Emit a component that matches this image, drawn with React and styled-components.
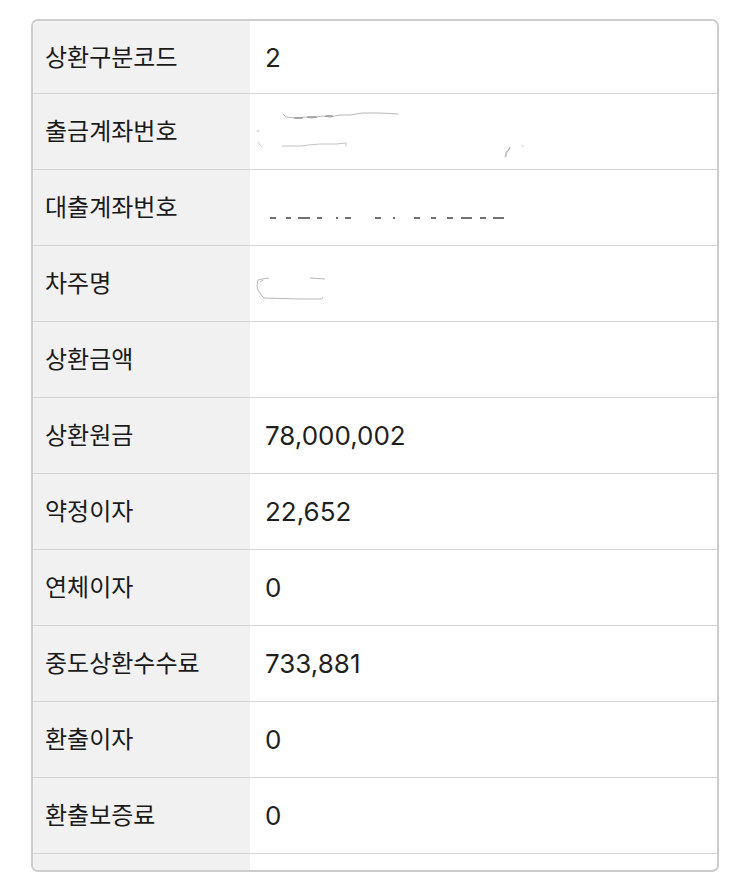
import React from "react";
import styled, { createGlobalStyle } from "styled-components";

const Global = createGlobalStyle`
  html, body { margin: 0; padding: 0; background: #ffffff; }
  body { font-family: "Noto Sans CJK KR", "Noto Sans", sans-serif; }
  * { box-sizing: border-box; }
`;

const Page = styled.div`
  width: 750px;
  height: 891px;
  padding: 19px 0 0 31px;
`;

const Frame = styled.div`
  width: 688px;
  border: 2px solid #cdcdcd;
  border-radius: 7px;
  overflow: hidden;
`;

const Row = styled.div`
  display: grid;
  grid-template-columns: 217px 1fr;
  height: ${(p) => p.$h}px;
  border-bottom: ${(p) => (p.$last ? "none" : "1px solid #d4d4d4")};
`;

const Label = styled.div`
  background: #f1f1f1;
  display: flex;
  align-items: center;
  padding: 0 0 4px 12px;
  font-family: "Noto Sans CJK KR", sans-serif;
  font-size: 24px;
  font-weight: 400;
  color: #1a1a1a;
`;

const Value = styled.div`
  position: relative;
  display: flex;
  align-items: center;
  padding-left: 15px;
  font-family: "Inter", "Noto Sans CJK KR", sans-serif;
  font-size: 26px;
  color: #1f1f1f;
`;

const Scribble = styled.svg`
  position: absolute;
  left: 0;
  top: 0;
  pointer-events: none;
`;

const AccountOut = () => (
  <Scribble width="300" height="75" viewBox="0 0 300 75">
    <g stroke="#9a9a9a" strokeWidth="1" fill="none" strokeLinecap="round">
      <path d="M33 20 L36 23 L45 24 L55 23 L62 24 L72 22 L80 23 L90 21 L100 21 L112 19 L130 19 L148 20" opacity="0.7" />
      <path d="M45 24 L52 24 M58 23 L66 23 M76 22 L82 22" strokeWidth="2" opacity="0.8" />
      <path d="M32 52 L52 52 L58 51 L70 50 L86 50 L96 49 L96 52" opacity="0.6" />
      <path d="M7 37 L9 37" opacity="0.6" />
      <path d="M8 48 L10 51 L12 53" opacity="0.5" />
      <path d="M255 63 L256 58 L259 56 L260 53 L257 58 L256 63" opacity="0.6" />
      <path d="M272 52 L273 52" opacity="0.6" />
    </g>
  </Scribble>
);

const AccountLoan = () => (
  <Scribble width="300" height="75" viewBox="0 0 300 75">
    <g stroke="#444" strokeWidth="1.6" fill="none">
      <path d="M20 48 L26 48 M36 48 L41 48 M48 48 L60 48 M67 48 L72 48 M86 48 L88 48 M95 48 L101 48 M125 48 L131 48 M143 48 L145 48 M164 48 L170 48 M181 48 L186 48 M197 48 L203 48 M211 48 L222 48 M230 48 L236 48 M243 48 L254 48" />
    </g>
  </Scribble>
);

const Borrower = () => (
  <Scribble width="300" height="75" viewBox="0 0 300 75">
    <g stroke="#9f9f9f" strokeWidth="1" fill="none" opacity="0.75">
      <path d="M12 33 L8 34 L7 40 L8 44 L10 47 L12 50 L14 52 L50 53 L72 53 L73 51" />
      <path d="M12 33 L19 32 M60 32 L75 33" />
      <path d="M10 36 L13 34" />
    </g>
  </Scribble>
);

const rows = [
  { label: "상환구분코드", value: "2" },
  { label: "출금계좌번호", value: <AccountOut /> },
  { label: "대출계좌번호", value: <AccountLoan /> },
  { label: "차주명", value: <Borrower /> },
  { label: "상환금액", value: "" },
  { label: "상환원금", value: "78,000,002" },
  { label: "약정이자", value: "22,652" },
  { label: "연체이자", value: "0" },
  { label: "중도상환수수료", value: "733,881" },
  { label: "환출이자", value: "0" },
  { label: "환출보증료", value: "0" },
];

export default function App() {
  return (
    <>
      <Global />
      <Page>
        <Frame>
          {rows.map((r, i) => (
            <Row key={r.label} $h={i === 0 ? 73 : 76}>
              <Label>{r.label}</Label>
              <Value>{r.value}</Value>
            </Row>
          ))}
          <Row $h={16} $last>
            <Label />
            <Value />
          </Row>
        </Frame>
      </Page>
    </>
  );
}
